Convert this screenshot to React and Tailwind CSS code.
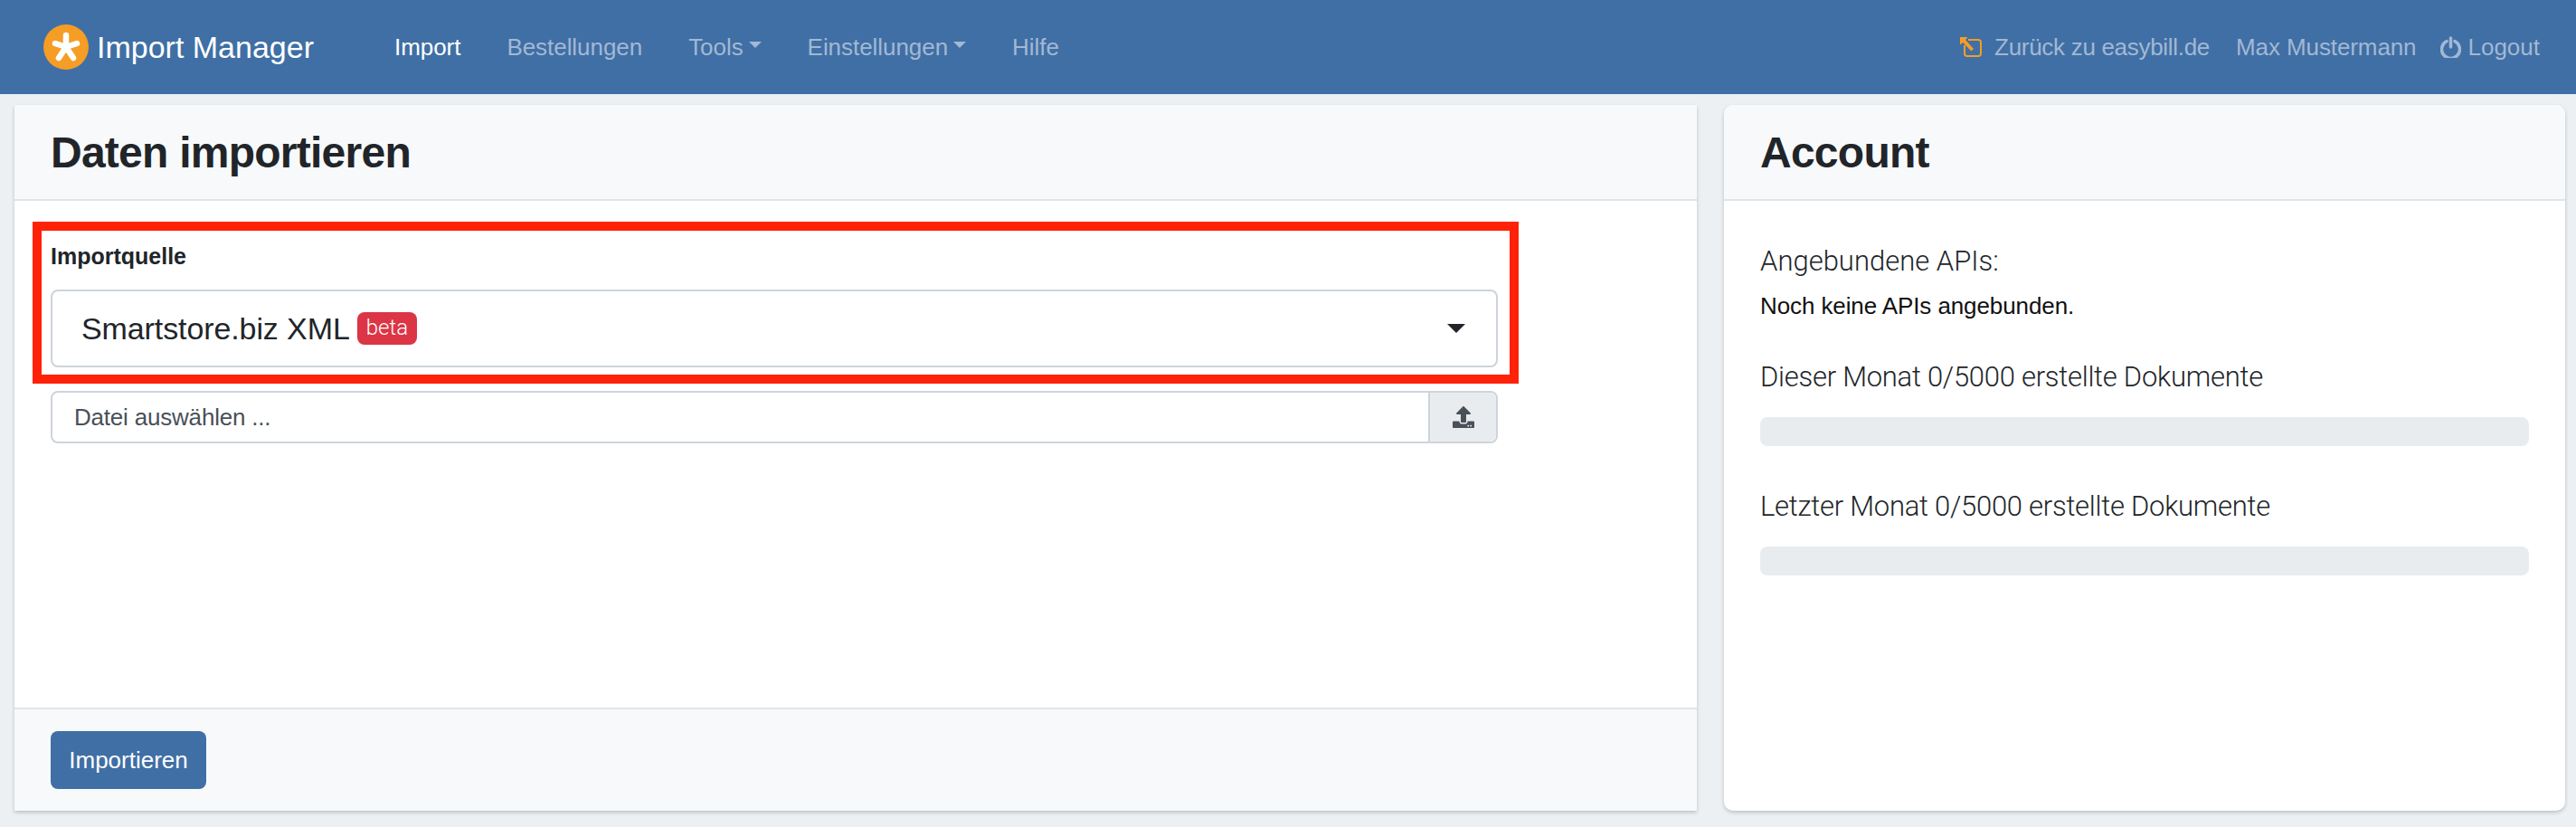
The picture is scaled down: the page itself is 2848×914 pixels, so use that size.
import { FaUpload } from "react-icons/fa";

const navItems = [
  { label: "Bestellungen" },
  { label: "Tools", caret: true },
  { label: "Einstellungen", caret: true },
  { label: "Hilfe" },
];

function Logo() {
  return (
    <svg width="50" height="50" viewBox="0 0 50 50" className="shrink-0">
      <circle cx="25" cy="25" r="25" fill="#f59d24" />
      <g stroke="#fff" strokeWidth="6.5" strokeLinecap="round">
        <line x1="25" y1="25" x2="25" y2="12" />
        <line x1="25" y1="25" x2="37" y2="21" />
        <line x1="25" y1="25" x2="33" y2="37" />
        <line x1="25" y1="25" x2="17" y2="37" />
        <line x1="25" y1="25" x2="13" y2="21" />
      </g>
    </svg>
  );
}

function BackIcon() {
  return (
    <svg width="24" height="22" viewBox="0 0 24 22" fill="none" className="shrink-0">
      <path d="M5 9v9a3 3 0 0 0 3 3h12a3 3 0 0 0 3-3V6a3 3 0 0 0-3-3H9" stroke="#f59d24" strokeWidth="2" />
      <path d="M0 0h8.5L6 3l9 10-2.6 2.6L3.200 6 0 8.500z" fill="#f59d24" />
    </svg>
  );
}

function PowerIcon() {
  return (
    <svg width="23" height="24" viewBox="0 0 23 24" fill="none" className="shrink-0">
      <path d="M7 5.500a10 10 0 1 0 9 0" stroke="currentColor" strokeWidth="3.500" strokeLinecap="round" />
      <path d="M11.500 2v10" stroke="currentColor" strokeWidth="3.500" strokeLinecap="round" />
    </svg>
  );
}

function Caret() {
  return <span className="ml-[6px] mb-[5px] w-0 h-0 border-x-[7px] border-x-transparent border-t-[7px] border-t-current" />;
}

function Navbar() {
  return (
    <nav className="h-[104px] bg-[#3f6fa5] flex items-center pl-12 pr-10 text-[26px] text-[#a3b8d3]">
      <div className="flex items-center gap-[9px] text-white text-[34px] w-[388px]">
        <Logo />
        <span>Import Manager</span>
      </div>
      <div className="flex items-center gap-[51px] tracking-[-0.05px]">
        <a className="text-white">Import</a>
        {navItems.map((item) => (
          <a key={item.label} className="flex items-center">
            {item.label}
            {item.caret && <Caret />}
          </a>
        ))}
      </div>
      <div className="ml-auto flex items-center">
        <BackIcon />
        <a className="ml-[14px] tracking-[-0.3px]">Zurück zu easybill.de</a>
        <a className="ml-[29px] tracking-[-0.1px]">Max Mustermann</a>
        <span className="ml-[27px] mr-[7px]">
          <PowerIcon />
        </span>
        <a>Logout</a>
      </div>
    </nav>
  );
}

function ImportCard() {
  return (
    <section className="relative w-[1860px] bg-white flex flex-col shadow-[0_2px_4px_rgba(0,0,0,0.2)]">
      <header className="h-[106px] shrink-0 bg-[#f7f9fb] border-b-2 border-[#e1e4e8] pl-10 pt-[2px] flex items-center">
        <h1 className="text-[48px] font-bold tracking-[-0.75px] text-[#212529]">Daten importieren</h1>
      </header>

      <div className="flex-1 pl-10 pt-[46px] w-[1640px]">
        <label className="block text-[25px] leading-[30px] font-bold text-[#212529]">Importquelle</label>
        <div className="mt-[22px] h-[86px] border-2 border-[#ced4da] rounded-lg flex items-center pl-[32px] pr-[34px] text-[#212529]">
          <span className="text-[34px] tracking-[-0.1px]">Smartstore.biz XML</span>
          <span className="ml-[8px] h-9 px-[10px] rounded-lg bg-[#dc3545] text-white text-[24px] leading-[34px] font-['Roboto',sans-serif] font-light">beta</span>
          <span className="ml-auto w-0 h-0 border-x-[10px] border-x-transparent border-t-[10px] border-t-[#212529]" />
        </div>
        <div className="mt-[26px] h-[58px] border-2 border-[#ced4da] rounded-lg flex overflow-hidden text-[#495057]">
          <div className="flex-1 pl-[24px] flex items-center text-[26px] tracking-[-0.2px]">Datei auswählen ...</div>
          <div className="w-[75px] bg-[#e9ecef] border-l-2 border-[#ced4da] flex items-center justify-center">
            <FaUpload size={24} />
          </div>
        </div>
      </div>

      <footer className="h-[114px] shrink-0 bg-[#f7f9fb] border-t-2 border-[#e1e4e8] pl-10 flex items-center">
        <button className="w-[172px] h-16 rounded-lg bg-[#3f6fa5] text-white text-[26px]">Importieren</button>
      </footer>

      {/* red annotation frame */}
      <div className="absolute left-5 top-[129px] w-[1643px] h-[179px] border-10 border-[#ff2208]" />
    </section>
  );
}

function UsageBlock({ label, className }) {
  return (
    <div className={className}>
      <p className="text-[31px] leading-[38px] tracking-[-0.27px] font-['Roboto',sans-serif] font-light text-[#212529]">{label}</p>
      <div className="mt-[25px] h-8 rounded-lg bg-[#e9ecef]" />
    </div>
  );
}

function AccountCard() {
  return (
    <aside className="flex-1 bg-white rounded-[10px] overflow-hidden flex flex-col shadow-[0_2px_4px_rgba(0,0,0,0.2)]">
      <header className="h-[106px] shrink-0 bg-[#f7f9fb] border-b-2 border-[#e1e4e8] pl-10 pt-[2px] flex items-center">
        <h2 className="text-[48px] font-bold tracking-[-0.75px] text-[#212529]">Account</h2>
      </header>
      <div className="pl-10 pr-10 pt-[48px]">
        <p className="text-[31px] leading-[38px] font-['Roboto',sans-serif] font-light text-[#212529]">Angebundene APIs:</p>
        <p className="mt-[15px] text-[26px] leading-[30px] tracking-[-0.1px] text-[#111]">Noch keine APIs angebunden.</p>
        <UsageBlock label="Dieser Monat 0/5000 erstellte Dokumente" className="mt-[45px]" />
        <UsageBlock label="Letzter Monat 0/5000 erstellte Dokumente" className="mt-[48px]" />
      </div>
    </aside>
  );
}

export default function App() {
  return (
    <div className="h-[914px] bg-[#ecf0f3] font-['Liberation_Sans',Arial,sans-serif]">
      <Navbar />
      <main className="h-[810px] flex gap-[30px] pl-4 pr-3 pt-3 pb-[18px]">
        <ImportCard />
        <AccountCard />
      </main>
    </div>
  );
}
